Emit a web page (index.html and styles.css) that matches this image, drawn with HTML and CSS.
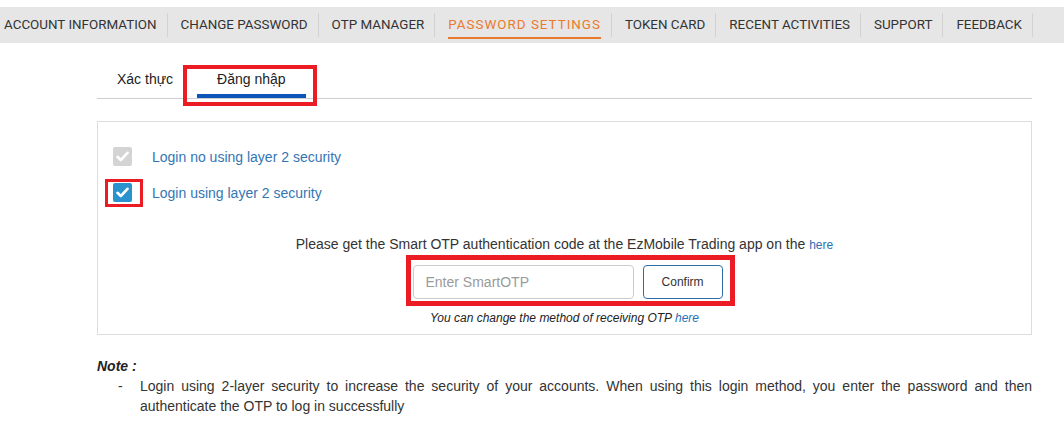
FILE: index.html
```html
<!DOCTYPE html>
<html lang="en">

<head>
    <meta charset="UTF-8">
    <meta name="viewport" content="width=device-width, initial-scale=1.0">
    <title>Password settings</title>
    <link rel="stylesheet" href="styles.css">
</head>

<body>
    <nav class="menu">
        <a class="menu-item">ACCOUNT INFORMATION</a>
        <a class="menu-item">CHANGE PASSWORD</a>
        <a class="menu-item">OTP MANAGER</a>
        <a class="menu-item active"><span>PASSWORD SETTINGS</span></a>
        <a class="menu-item">TOKEN CARD</a>
        <a class="menu-item">RECENT ACTIVITIES</a>
        <a class="menu-item">SUPPORT</a>
        <a class="menu-item">FEEDBACK</a>
    </nav>

    <div class="content">
        <div class="tabs">
            <div class="tab">Xác thực</div>
            <div class="tab selected">
                Đăng nhập
                <div class="mark mark-tab"></div>
            </div>
        </div>

        <section class="panel">
            <div class="option">
                <span class="check disabled">
                    <svg width="13" height="11" viewBox="0 0 13 11"><path d="M1.5 5.8 L4.8 9 L11.5 1.8" fill="none" stroke="#fff" stroke-width="2.6" stroke-linecap="round" stroke-linejoin="round"/></svg>
                </span>
                <label>Login no using layer 2 security</label>
            </div>
            <div class="option">
                <span class="check on">
                    <svg width="13" height="11" viewBox="0 0 13 11"><path d="M1.5 5.8 L4.8 9 L11.5 1.8" fill="none" stroke="#fff" stroke-width="2.6" stroke-linecap="round" stroke-linejoin="round"/></svg>
                    <span class="mark mark-check"></span>
                </span>
                <label>Login using layer 2 security</label>
            </div>

            <p class="hint">Please get the Smart OTP authentication code at the EzMobile Trading app on the <a class="link">here</a></p>
            <div class="otp">
                <input type="text" placeholder="Enter SmartOTP">
                <button>Confirm</button>
                <div class="mark mark-otp"></div>
            </div>
            <p class="small">You can change the method of receiving OTP <a class="link">here</a></p>
        </section>

        <div class="note">
            <b>Note :</b>
            <div class="note-row">
                <span class="dash">-</span>
                <p>Login using 2-layer security to increase the security of your accounts. When using this login method, you enter the password and then authenticate the OTP to log in successfully</p>
            </div>
        </div>
    </div>
</body>

</html>
```

FILE: styles.css
```css
body {
    margin: 0;
    font-family: "Liberation Sans", Arial, sans-serif;
    font-size: 14px;
    color: #333;
}

.menu {
    display: flex;
    align-items: center;
    margin-top: 7px;
    height: 36px;
    background-color: #e6e6e6;
    font-family: Roboto, sans-serif;
    font-size: 13.4px;
    white-space: nowrap;
    overflow: hidden;
}

.menu-item {
    display: block;
    line-height: 24px;
    padding: 0 10px 0 13px;
    border-right: 1px solid #d2d2d2;
    color: #333;
}

.menu-item:first-child {
    padding-left: 4px;
}

.menu-item.active {
    color: #ea7a30;
    letter-spacing: 1px;
}

.menu-item.active span {
    display: inline-block;
    box-shadow: 0 2px 0 #ea7a30;
}

.content {
    margin-left: 97px;
    width: 935px;
}

.tabs {
    display: flex;
    padding-top: 16px;
    border-bottom: 1px solid #cfcfcf;
}

.tab {
    position: relative;
    padding: 12px 20px 7px;
    line-height: 16px;
    border-bottom: 4px solid transparent;
    color: #222;
}

.tab:first-child {
    margin-right: 4px;
}

.tab.selected {
    border-bottom-color: #0b56b8;
}

.mark {
    position: absolute;
    border: 4px solid #ec1c24;
    box-sizing: border-box;
}

.mark-tab {
    left: -14px;
    top: 6px;
    width: 134px;
    height: 41px;
}

.panel {
    margin-top: 22px;
    border: 1px solid #dddddd;
    padding: 25px 15px 8px;
}

.option {
    display: flex;
    align-items: center;
    height: 19px;
    margin-bottom: 17px;
}

.option:last-of-type {
    margin-bottom: 0;
}

.check {
    position: relative;
    display: flex;
    align-items: center;
    justify-content: center;
    width: 19px;
    height: 19px;
    border-radius: 2px;
    margin-right: 20px;
}

.check.disabled {
    background-color: #d4d4d4;
}

.check.on {
    background-color: #2a92cc;
}

.mark-check {
    left: -8px;
    top: -4px;
    width: 38px;
    height: 28px;
    border-width: 3px;
}

.option label {
    color: #3476b4;
}

.hint {
    text-align: center;
    line-height: 20px;
    margin: 32px 0 10px;
}

.link {
    color: #2a6fb3;
    font-size: 12px;
}

.otp {
    position: relative;
    display: flex;
    justify-content: center;
    gap: 9px;
    width: 310px;
    margin: 0 auto;
    left: 3px;
}

.otp input {
    width: 222px;
    height: 34px;
    box-sizing: border-box;
    border: 1px solid #cccccc;
    border-radius: 4px;
    padding: 0 12px;
    font-family: "Liberation Sans", Arial, sans-serif;
    font-size: 14px;
}

.otp input::placeholder {
    color: #9a9a9a;
}

.otp button {
    width: 80px;
    height: 34px;
    background-color: #fff;
    border: 1px solid #2f6ea5;
    border-radius: 4px;
    font-family: "Liberation Sans", Arial, sans-serif;
    font-size: 12px;
    color: #333;
}

.mark-otp {
    left: -7px;
    top: -10px;
    width: 329px;
    height: 51px;
    border-width: 5px;
}

.small {
    text-align: center;
    font-style: italic;
    font-size: 12px;
    line-height: 16px;
    margin: 11px 0 0;
    color: #222;
}

.note {
    margin-top: 21px;
    line-height: 20px;
}

.note b {
    font-style: italic;
    color: #222;
}

.note-row {
    display: flex;
}

.dash {
    width: 43px;
    padding-left: 21px;
    box-sizing: border-box;
    flex-shrink: 0;
}

.note-row p {
    margin: 0;
    text-align: justify;
}
```
